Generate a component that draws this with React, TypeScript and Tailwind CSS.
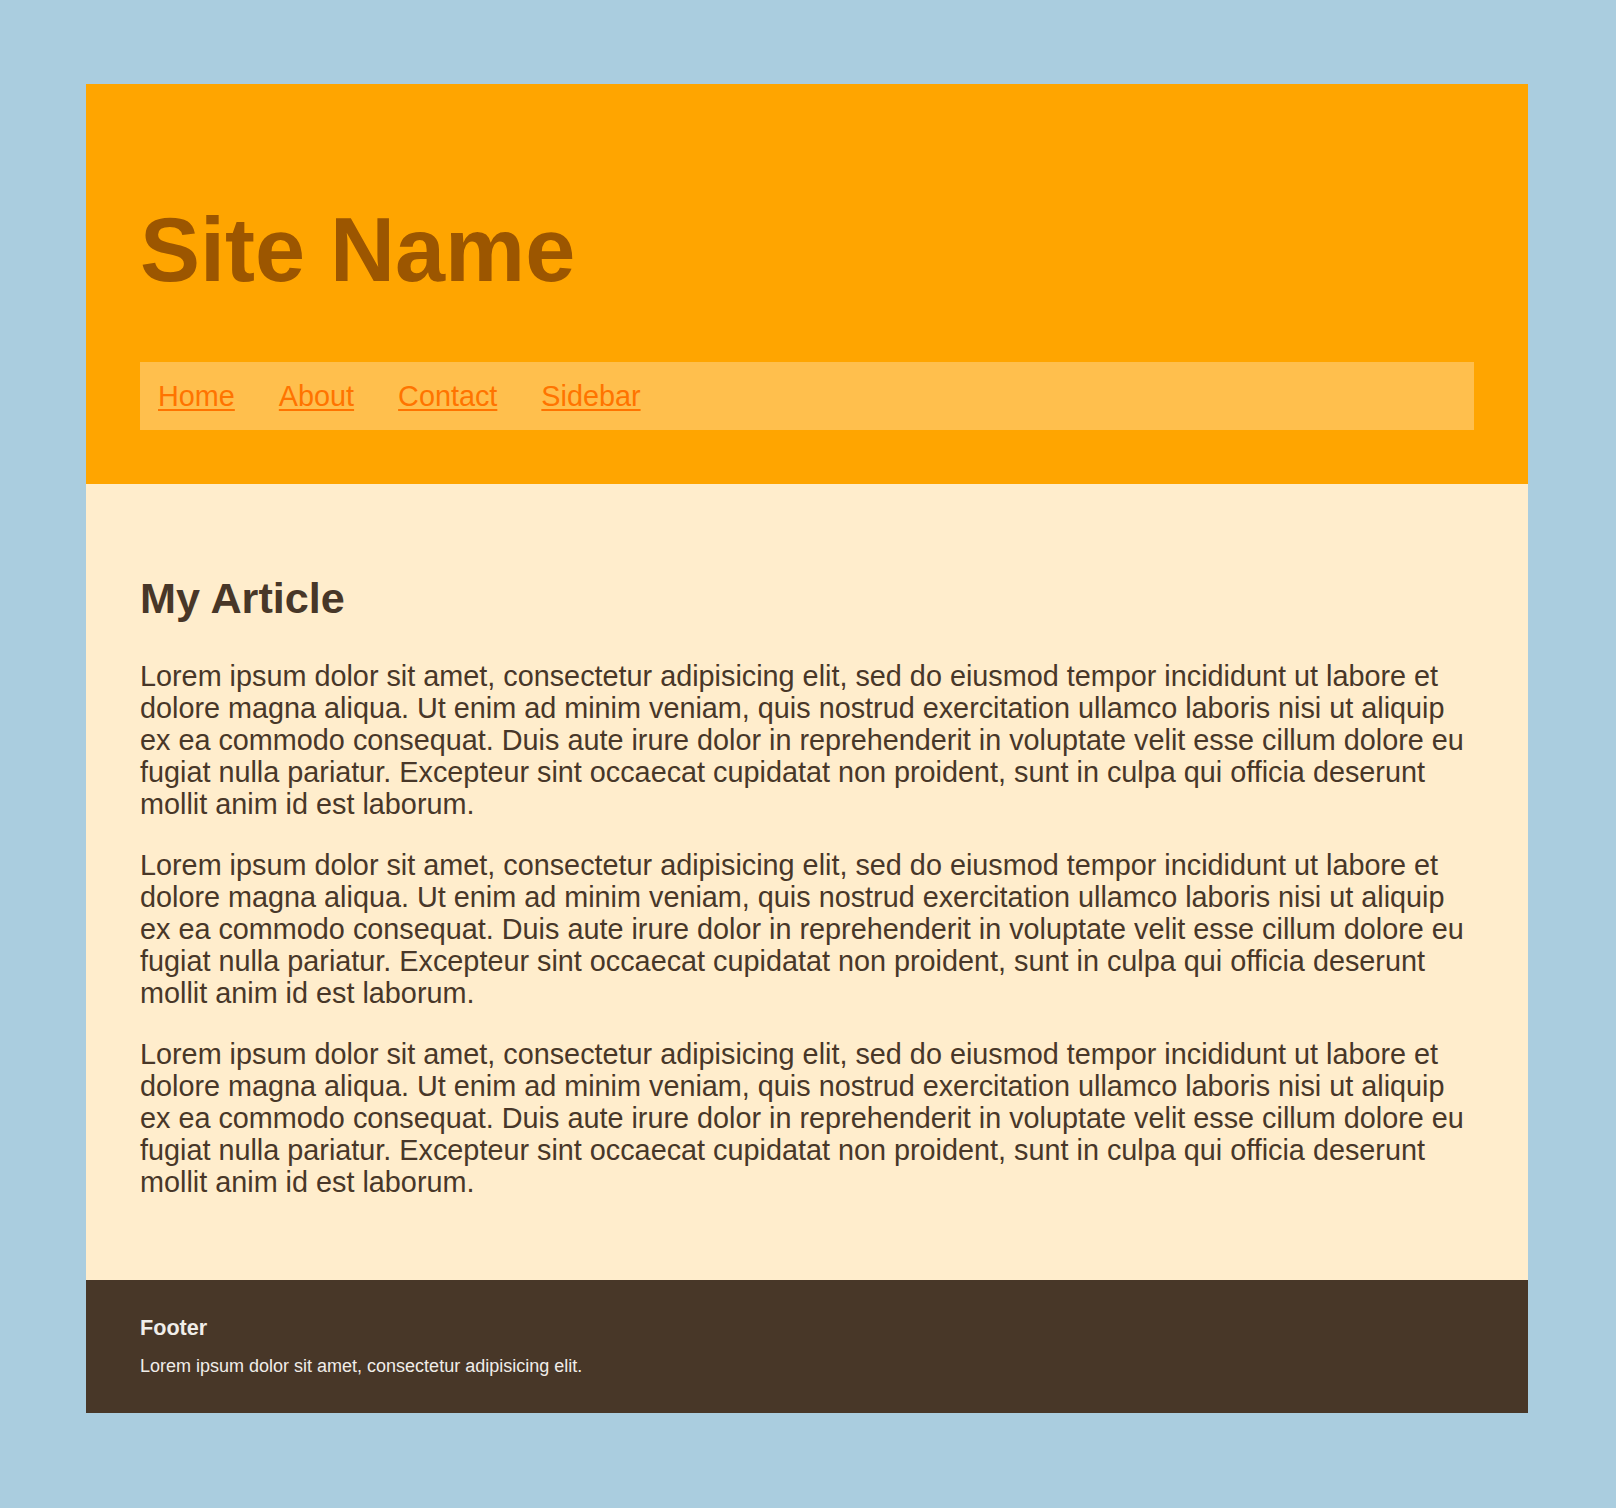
import React from 'react';

const lorem =
  'Lorem ipsum dolor sit amet, consectetur adipisicing elit, sed do eiusmod tempor incididunt ut labore et dolore magna aliqua. Ut enim ad minim veniam, quis nostrud exercitation ullamco laboris nisi ut aliquip ex ea commodo consequat. Duis aute irure dolor in reprehenderit in voluptate velit esse cillum dolore eu fugiat nulla pariatur. Excepteur sint occaecat cupidatat non proident, sunt in culpa qui officia deserunt mollit anim id est laborum.';

const links = ['Home', 'About', 'Contact', 'Sidebar'];

const App = () => {
  return (
    <div
      className="min-h-[1508px] bg-[#aacddf] pt-[84px] pb-[95px]"
      style={{ fontFamily: '"Liberation Sans", Arial, Helvetica, sans-serif' }}
    >
      <div className="ml-[86px] w-[1442px]">
        <header className="bg-[#ffa500] p-[54px]">
          <h1 className="mt-[63px] mb-[62px] text-[90px] font-bold leading-[1.1] text-[#9c5600]">
            Site Name
          </h1>
          <nav className="flex gap-[44px] bg-[#ffbf4d] px-[18px] py-[18px] text-[28.8px] leading-[32px]">
            {links.map((link) => (
              <a key={link} href="#" className="text-[#ff7400] underline decoration-2 underline-offset-[3px]">
                {link}
              </a>
            ))}
          </nav>
        </header>

        <main className="bg-[#ffedcc] px-[54px] pt-[54px] pb-[53px] text-[#483728]">
          <h2 className="mt-[37px] mb-[37px] text-[43.2px] font-bold leading-[1.1]">My Article</h2>
          {[0, 1, 2].map((i) => (
            <p key={i} className="mb-[29px] text-[28.8px] leading-[32px]">
              {lorem}
            </p>
          ))}
        </main>

        <footer className="bg-[#483728] px-[54px] py-[36px] text-[#f0ede9]">
          <h3 className="text-[21.6px] font-bold leading-[1.1]">Footer</h3>
          <p className="mt-[18px] text-[18px] leading-[1.1]">
            Lorem ipsum dolor sit amet, consectetur adipisicing elit.
          </p>
        </footer>
      </div>
    </div>
  );
};

export default App;
